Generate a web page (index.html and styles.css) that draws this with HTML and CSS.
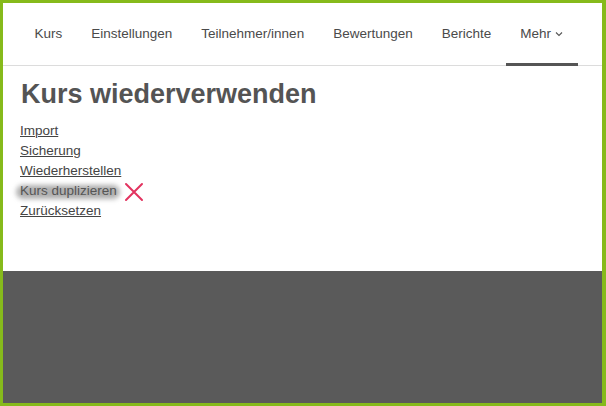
FILE: index.html
```html
<!DOCTYPE html>
<html lang="de">
<head>
    <meta charset="UTF-8">
    <meta name="viewport" content="width=device-width, initial-scale=1.0">
    <title>Kurs wiederverwenden</title>
    <link rel="stylesheet" href="styles.css">
</head>
<body>

    <div class="frame">
        <nav class="course-nav">
            <a href="#" class="nav-item">Kurs</a>
            <a href="#" class="nav-item">Einstellungen</a>
            <a href="#" class="nav-item">Teilnehmer/innen</a>
            <a href="#" class="nav-item">Bewertungen</a>
            <a href="#" class="nav-item">Berichte</a>
            <a href="#" class="nav-item active">Mehr
                <svg class="chevron" width="8" height="6" viewBox="0 0 8 6">
                    <path d="M1 1.5 L4 4.5 L7 1.5" fill="none" stroke="#555" stroke-width="1.1"/>
                </svg>
            </a>
        </nav>

        <main class="content">
            <h1>Kurs wiederverwenden</h1>
            <ul class="reuse-links">
                <li><a href="#">Import</a></li>
                <li><a href="#">Sicherung</a></li>
                <li><a href="#">Wiederherstellen</a></li>
                <li class="removed">
                    <span class="smudge">Kurs duplizieren</span>
                    <svg class="cross" width="20" height="20" viewBox="0 0 20 20">
                        <path d="M2 2 L18 18 M18 2 L2 18" stroke="#e2335f" stroke-width="2" stroke-linecap="round"/>
                    </svg>
                </li>
                <li><a href="#">Zurücksetzen</a></li>
            </ul>
        </main>

        <footer class="page-footer"></footer>
    </div>

</body>
</html>
```

FILE: styles.css
```css
body {
    margin: 0;
    padding: 0;
    font-family: "Liberation Sans", Arial, sans-serif;
    color: #444;
}
.frame {
    height: 406px;
    box-sizing: border-box;
    border: 3px solid #86ba1b;
    border-right-width: 4px;
    background-color: white;
    display: flex;
    flex-direction: column;
}
.course-nav {
    display: flex;
    align-items: flex-end;
    height: 62px;
    padding-left: 17px;
    border-bottom: 1px solid #dcdcdc;
}
.nav-item {
    display: flex;
    align-items: center;
    gap: 4px;
    height: 59px;
    padding: 0 14.5px;
    font-size: 13.5px;
    color: #4a4a4a;
    text-decoration: none;
    border-bottom: 3px solid transparent;
    margin-bottom: -1px;
}
.nav-item.active {
    border-bottom-color: #555;
}
.chevron {
    margin-top: 1px;
}
.content {
    flex: 1;
    padding: 0 17px;
}
h1 {
    margin: 12px 0 11px 1px;
    font-size: 27px;
    line-height: 32px;
    font-weight: bold;
    color: #545454;
}
.reuse-links {
    list-style: none;
    margin: 0;
    padding: 0;
}
.reuse-links li {
    font-size: 13.5px;
    line-height: 20px;
    height: 20px;
}
.reuse-links a {
    color: #444;
    text-decoration: underline;
}
.removed {
    display: flex;
    align-items: center;
    gap: 7px;
}
.smudge {
    position: relative;
    z-index: 0;
    color: #555;
}
.smudge::before {
    content: "";
    position: absolute;
    left: -4px;
    right: -3px;
    top: 4px;
    bottom: 2px;
    background: rgba(110, 110, 110, 0.55);
    border-radius: 7px;
    filter: blur(2.5px);
    z-index: -1;
}
.cross {
    margin-top: 2px;
}
.page-footer {
    height: 132px;
    background-color: #5a5a5a;
}
```
